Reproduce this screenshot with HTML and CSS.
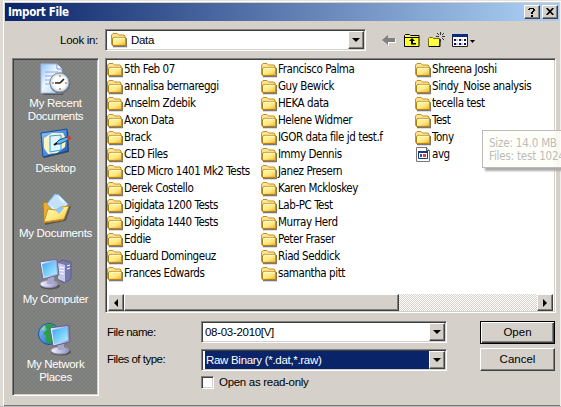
FILE: index.html
```html
<!DOCTYPE html>
<html lang="en">
<head>
<meta charset="utf-8">
<title>Import File</title>
<link rel="stylesheet" href="styles.css">
</head>
<body>
<svg class="defs" aria-hidden="true">
  <defs>
    <linearGradient id="gold" x1="0" y1="0" x2="1" y2="1"><stop offset="0" stop-color="#fffbb4"/><stop offset=".55" stop-color="#ffe982"/><stop offset="1" stop-color="#efb52c"/></linearGradient>
    <linearGradient id="screen" x1="0" y1="0" x2="1" y2="1"><stop offset="0" stop-color="#39a5f4"/><stop offset="1" stop-color="#b4f4ff"/></linearGradient>
    <linearGradient id="blue" x1="0" y1="0" x2="1" y2="1"><stop offset="0" stop-color="#8cc6ff"/><stop offset="1" stop-color="#1555b8"/></linearGradient>
    <linearGradient id="paper" x1="0" y1="0" x2="1" y2="1"><stop offset="0" stop-color="#8fc2fa"/><stop offset=".45" stop-color="#eef7ff"/><stop offset="1" stop-color="#a9cdf6"/></linearGradient>
    <linearGradient id="silver" x1="0" y1="0" x2="1" y2="0"><stop offset="0" stop-color="#f6f6ff"/><stop offset="1" stop-color="#8f91c4"/></linearGradient>
    <symbol id="folder" viewBox="0 0 16 16">
      <path d="M2 14.500h13.500V6" fill="none" stroke="#777" stroke-width="1.400"/>
      <path d="M.6 12.500V3L2 1.500h4L7.500 3H13l1 1v9H1.500z" fill="#ffe695" stroke="#c58e18"/>
      <path d="M1.500 13.400V6.500L3 5.400h11.300l.5.600v7.400z" fill="url(#gold)" stroke="#b97d08"/>
      <path d="M2.600 12V7l1-.8h10" fill="none" stroke="#fffdd5"/>
    </symbol>
  </defs>
</svg>
<div class="window">
  <header class="title">
    <h1>Import File</h1>
    <button class="cap" aria-label="Help"><svg width="9" height="10" viewBox="0 0 9 10"><path d="M1 3V2h1V1h5v1h1v2H7v1H6v2H4V5h1V4h1V2H3v1zM4 8h2v2H4z"/></svg></button>
    <button class="cap close" aria-label="Close"><svg width="8" height="7" viewBox="0 0 8 7"><path d="M.7 0l6.600 7M7.300 0L.7 7" stroke="#000" stroke-width="1.700"/></svg></button>
  </header>
  <div class="lookin">
    <label>Look in:</label>
    <div class="combo path"><svg class="fold"><use href="#folder"/></svg><span>Data</span><i class="drop"></i></div>
    <div class="tools">
      <svg width="14" height="12" viewBox="0 0 14 12"><path d="M1 7l6 5V9h7V5" fill="#fff"/><path d="M0 6l6-5v3h7v4H6v3z" fill="#808080"/></svg>
      <svg width="16" height="14" viewBox="0 0 16 14"><path d="M.5 13.500v-11l1-1h4l1 1h8.500v11z" fill="#ff3" stroke="#000"/><path d="M1 4.500h14" stroke="#000"/><path d="M7.500 5v1h-1v1h-1v1h5V7h-1V6h-1V5zM7 8h2v2h3v1.500H7z" fill="#000"/></svg>
      <svg width="17" height="15" viewBox="0 0 17 15"><path d="M.5 14.500v-8l1-1h3l1 1h6v8z" fill="#ff4" stroke="#776e00"/><path d="M1 14.500h11V7" fill="none" stroke="#000"/><path d="M12.500 0v3M12.500 7v3M8 4.500h3M14 4.500h3M9 1l2 2M16 1l-2 2M14 6l2 2" stroke="#333" fill="none"/></svg>
      <svg width="24" height="13" viewBox="0 0 24 13"><path d="M.5.500h15v12H.5z" fill="#fff" stroke="#222"/><path d="M0 0h16v3H0z" fill="#0b2a80"/><path d="M2 5h2v2H2zM7 5h2v2H7zM12 5h2v2h-2zM2 9h2v2H2zM7 9h2v2H7zM12 9h2v2h-2z" fill="#10106c"/><path d="M4 6h2M9 6h2M4 10h2M9 10h2" stroke="#999"/><path d="M18 6h5l-2.500 3z"/></svg>
    </div>
  </div>
  <main>
    <nav class="places">
      <a class="recent"><svg width="32" height="32" viewBox="0 0 32 32"><path d="M3 31h19V7" fill="none" stroke="#555" stroke-width="2"/><path d="M1 1h16l5 5v24H1z" fill="url(#paper)" stroke="#9bb7e8"/><path d="M17 1v5h5" fill="#fff" stroke="#7095d6"/><path d="M5 9h13M5 13h9M5 17h5M5 21h4" stroke="#89a9df"/><circle cx="20" cy="20" r="10.500" fill="#66707d"/><circle cx="19.500" cy="19.500" r="9.500" fill="#d4e3f0" stroke="#8596aa"/><circle cx="19.500" cy="19.500" r="7.300" fill="#fff"/><path d="M20 20l4-4M20 20h-5" stroke="#222" stroke-width="1.700"/><path d="M19 13h2M19 26h2M13 19v2M26 19v2" stroke="#e27a35" stroke-width="1.400"/></svg><span>My Recent<br>Documents</span></a>
      <a class="desktop"><svg width="32" height="32" viewBox="0 0 32 32"><path d="M2 8l26-5 1 21-25 6z" fill="#444"/><path d="M1 5l26-4 1 22-25 6z" fill="url(#blue)" stroke="#0c4d9f"/><path d="M4 10l8-5 11 0 3 6-1 8-8 6-9 1-4-6z" fill="#fff3bf"/><path d="M10 8l11-1v15l-11 2z" fill="#e1f6ff" stroke="#2da1e9"/><path d="M15 16l4-4 8-3 2 1-1 2-8 4z" fill="#60b8ed" stroke="#174e88"/><path d="M14 17l3-2" stroke="#111" stroke-width="2"/><circle cx="29" cy="10" r="2" fill="#d33f22"/></svg><span>Desktop</span></a>
      <a class="docs"><svg width="32" height="32" viewBox="0 0 32 32"><path d="M5 31l20-4 5-14" fill="none" stroke="#555" stroke-width="2"/><path d="M3 10l4-1 3 3 16-1-3 16-19 3z" fill="#e8ad30" stroke="#b87911"/><path d="M7 11L15 1l4 1 9 9-9 12z" fill="url(#paper)" stroke="#7db3e8"/><path d="M9 11l8-7 8 8-8 6z" fill="#c2e3ff"/><path d="M4 29l4-13 8 1 5-3 8-1-5 13z" fill="url(#gold)" stroke="#c5912c"/><path d="M15 17l6-3 3 1-5 6z" fill="#8dc8f7"/></svg><span>My Documents</span></a>
      <a class="computer"><svg width="34" height="32" viewBox="0 0 34 32"><path d="M19 5l4-3 9 2v17l-7 4-6-4z" fill="#7779aa" stroke="#5f6190"/><path d="M19 5l7 2v17l-7-3z" fill="#c7c8ed"/><path d="M20 9l5 1M20 12l5 1M20 15l5 1M28 8l3-1M28 11l3-1" stroke="#fff"/><ellipse cx="11" cy="28" rx="10" ry="3.500" fill="#555"/><ellipse cx="10" cy="26" rx="9" ry="3.500" fill="url(#silver)" stroke="#9696b8"/><path d="M9 18h6v8H8z" fill="#a6a7cd"/><path d="M1 4l17-3 2 16-16 4z" fill="url(#silver)" stroke="#696aa0"/><path d="M3 6l14-3 1 13-13 3z" fill="url(#screen)"/></svg><span>My Computer</span></a>
      <a class="network"><svg width="34" height="33" viewBox="0 0 34 33"><circle cx="11" cy="11" r="10.500" fill="url(#blue)" stroke="#1751a1"/><path d="M7 2l7-1 4 5-5 1 1 4-5 3-4-4 4-3zM8 14l8-1 1 5-5 3-4-3z" fill="#28a33b"/><path d="M3 6l4-3-1 5z" fill="#96e06f"/><ellipse cx="23" cy="29" rx="10" ry="3.500" fill="#555"/><ellipse cx="22" cy="27.500" rx="9" ry="3.500" fill="url(#silver)" stroke="#9696b8"/><path d="M20 19h6v8h-6z" fill="#a6a7cd"/><path d="M12 5l19-3 1 17-17 4z" fill="url(#silver)" stroke="#5f6190"/><path d="M14 7l15-3 1 13-14 4z" fill="url(#screen)"/></svg><span>My Network<br>Places</span></a>
    </nav>
    <section class="right">
      <div class="files">
        <div class="cols">
          <ul>
            <li><svg><use href="#folder"/></svg>5th Feb 07</li>
            <li><svg><use href="#folder"/></svg>annalisa bernareggi</li>
            <li><svg><use href="#folder"/></svg>Anselm Zdebik</li>
            <li><svg><use href="#folder"/></svg>Axon Data</li>
            <li><svg><use href="#folder"/></svg>Brack</li>
            <li><svg><use href="#folder"/></svg>CED Files</li>
            <li><svg><use href="#folder"/></svg>CED Micro 1401 Mk2 Tests</li>
            <li><svg><use href="#folder"/></svg>Derek Costello</li>
            <li><svg><use href="#folder"/></svg>Digidata 1200 Tests</li>
            <li><svg><use href="#folder"/></svg>Digidata 1440 Tests</li>
            <li><svg><use href="#folder"/></svg>Eddie</li>
            <li><svg><use href="#folder"/></svg>Eduard Domingeuz</li>
            <li><svg><use href="#folder"/></svg>Frances Edwards</li>
          </ul>
          <ul>
            <li><svg><use href="#folder"/></svg>Francisco Palma</li>
            <li><svg><use href="#folder"/></svg>Guy Bewick</li>
            <li><svg><use href="#folder"/></svg>HEKA data</li>
            <li><svg><use href="#folder"/></svg>Helene Widmer</li>
            <li><svg><use href="#folder"/></svg>IGOR data file jd test.f</li>
            <li><svg><use href="#folder"/></svg>Immy Dennis</li>
            <li><svg><use href="#folder"/></svg>Janez Presern</li>
            <li><svg><use href="#folder"/></svg>Karen Mckloskey</li>
            <li><svg><use href="#folder"/></svg>Lab-PC Test</li>
            <li><svg><use href="#folder"/></svg>Murray Herd</li>
            <li><svg><use href="#folder"/></svg>Peter Fraser</li>
            <li><svg><use href="#folder"/></svg>Riad Seddick</li>
            <li><svg><use href="#folder"/></svg>samantha pitt</li>
          </ul>
          <ul>
            <li><svg><use href="#folder"/></svg>Shreena Joshi</li>
            <li><svg><use href="#folder"/></svg>Sindy_Noise analysis</li>
            <li><svg><use href="#folder"/></svg>tecella test</li>
            <li><svg><use href="#folder"/></svg>Test</li>
            <li><svg><use href="#folder"/></svg>Tony</li>
            <li><svg viewBox="0 0 16 16"><path d="M1.500.500h10l3 3v11h-13z" fill="#fff" stroke="#777"/><path d="M11.500.500v3h3" fill="#ddd" stroke="#555"/><path d="M3.500 4.500h9v7h-9z" fill="#fff" stroke="#1b3584"/><path d="M3 4h10v2H3z" fill="#1b3584"/><path d="M5 7h2v3H5z" fill="#35b"/><path d="M8 7h3v3H8z" fill="#d44c30"/></svg>avg</li>
          </ul>
        </div>
        <div class="scroll"><i class="arrow left"></i><i class="thumb"></i><i class="track"></i><i class="arrow rightward"></i></div>
      </div>
      <form>
        <label>File name:</label>
        <div class="combo"><span>08-03-2010[V]</span><i class="drop"></i></div>
        <button type="button" class="default">Open</button>
        <label>Files of type:</label>
        <div class="combo selected"><span>Raw Binary (*.dat,*.raw)</span><i class="drop"></i></div>
        <button type="button">Cancel</button>
        <div class="readonly"><i></i><span>Open as read-only</span></div>
      </form>
    </section>
  </main>
  <div class="tip">Size: 14.0 MB<br>Files: test 1024</div>
</div>
</body>
</html>
```
FILE: styles.css
```css
* { box-sizing: border-box; }
body { margin: 0; background: #d5d1ca; color: #000; font: 11.5px/14px "Liberation Sans", sans-serif; letter-spacing: -.3px; overflow: hidden; }
.defs { position: absolute; width: 0; height: 0; }
svg { display: block; flex: none; }
.window { position: relative; width: 561px; height: 407px; padding: 3px 2px 0 5px; overflow: hidden; border-bottom: 1px solid #bbb; box-shadow: inset 3px 0 #dedbd5, inset 4px 0 #fff, inset 0 1px #e5e2dc, inset 0 2px #fff, inset -1px 0 #f0eee9, inset 0 -1px #777; }
.title { display: flex; align-items: center; height: 18px; padding-right: 1px; background: linear-gradient(90deg, #0a246a, #a6caf0 95%); }
h1 { flex: 1; margin: 0; padding-left: 3px; color: #fff; font: bold 11.5px/18px "DejaVu Sans Condensed", sans-serif; letter-spacing: -.3px; }
.cap, form button, .drop, .arrow, .thumb { background: #d5d1ca; border: 1px solid; border-color: #fff #404040 #404040 #fff; box-shadow: inset -1px -1px #808080; }
.cap { display: grid; place-items: center; width: 16px; height: 14px; padding: 0 1px 1px 0; }
.close { margin-left: 2px; }
.lookin { display: flex; align-items: center; height: 37px; padding-top: 1px; }
.lookin label { width: 100px; padding-right: 7px; text-align: right; }
.combo { display: flex; align-items: center; height: 22px; padding-left: 2px; background: #fff; border: 1px solid; border-color: #808080 #fff #fff #808080; box-shadow: inset 1px 1px #404040, inset -1px -1px #d5d1ca; }
.combo span { flex: 1; white-space: nowrap; }
.path { width: 261px; }
.path .fold { width: 16px; height: 16px; margin: 0 4px 0 3px; }
.drop { display: grid; place-items: center; width: 16px; height: 18px; margin-right: 1px; }
.drop::after { content: ""; border: 4px solid transparent; border-top-color: #000; border-bottom: 0; }
.tools { display: flex; align-items: center; gap: 8px; padding-left: 16px; }
.tools svg:nth-child(3) { margin: -2px -1px 0 0; }
main { display: flex; gap: 6px; height: 338px; padding-left: 7px; }
.places { display: flex; flex-direction: column; align-items: center; width: 87px; height: 338px; border: 1px solid; border-color: #808080 #fff #fff #808080; box-shadow: inset 1px 1px #404040, inset -1px -1px #d5d1ca; color: #fff; background: repeating-conic-gradient(#858580 0 25%, #7a7c7f 0 50%) 0 0/4px 4px; }
.places a { display: flex; flex-direction: column; align-items: center; height: 65px; text-align: center; line-height: 13px; letter-spacing: -.3px; white-space: nowrap; }
.places span { margin-top: 2px; }
.places .recent { margin-top: 4px; }
.places .computer span { margin-top: 3px; }
.right { width: 451px; }
.files { height: 255px; padding: 2px 2px 2px 1px; background: #fff; border: 1px solid; border-color: #808080 #fff #fff #808080; box-shadow: inset 1px 1px #404040, inset -1px -1px #d5d1ca; }
.cols { display: grid; grid-template-columns: 154px 154px 1fr; height: 233px; }
ul { list-style: none; margin: 0; padding: 0; }
li { display: flex; align-items: center; gap: 1px; height: 17px; white-space: nowrap; font: 11.5px/17px "DejaVu Sans Condensed", sans-serif; letter-spacing: -.43px; }
li svg { width: 16px; height: 16px; }
.scroll { display: flex; height: 17px; padding-left: 1px; }
.arrow { display: grid; place-items: center; width: 16px; }
.arrow::after { content: ""; border: 4px solid transparent; }
.left::after { border-right-color: #000; border-left: 0; }
.rightward::after { border-left-color: #000; border-right: 0; }
.thumb { width: 275px; }
.track { flex: 1; background: repeating-conic-gradient(#fff 0 25%, #d5d1ca 0 50%) 0 0/2px 2px; }
form { display: grid; grid-template-columns: 96px 246px 75px; grid-template-rows: 22px 22px 14px; row-gap: 5px; padding-top: 8px; align-items: center; }
form label { padding-left: 2px; letter-spacing: -.5px; }
form .combo { height: 22px; }
form .combo span { padding-left: 1px; }
form button { grid-column: 3; width: 75px; height: 23px; margin-left: 33px; padding: 0 0 1px; font: 11.5px/14px "Liberation Sans", sans-serif; color: #000; }
form .default { border-color: #000; box-shadow: inset 1px 1px #fff, inset -1px -1px #404040, inset -2px -2px #808080; }
.selected { margin-top: 1px; }
form .selected span { align-self: stretch; margin: 1px 0 1px 1px; padding-left: 1px; line-height: 18px; color: #fff; background: #0a246a; }
.readonly { grid-column: 2; display: flex; align-items: center; gap: 5px; }
.readonly i { width: 13px; height: 13px; background: #fff; border: 1px solid; border-color: #808080 #fff #fff #808080; box-shadow: inset 1px 1px #404040, inset -1px -1px #d5d1ca; }
.tip { position: absolute; left: 482px; top: 130px; width: 90px; height: 38px; padding: 6px 0 0 6px; border: 1px solid #bbb; background: rgba(255,255,248,.82); box-shadow: 3px 3px 2px #aaa; color: #bbb; font: 11.5px/13px "DejaVu Sans Condensed", sans-serif; letter-spacing: -.2px; white-space: nowrap; }
```
